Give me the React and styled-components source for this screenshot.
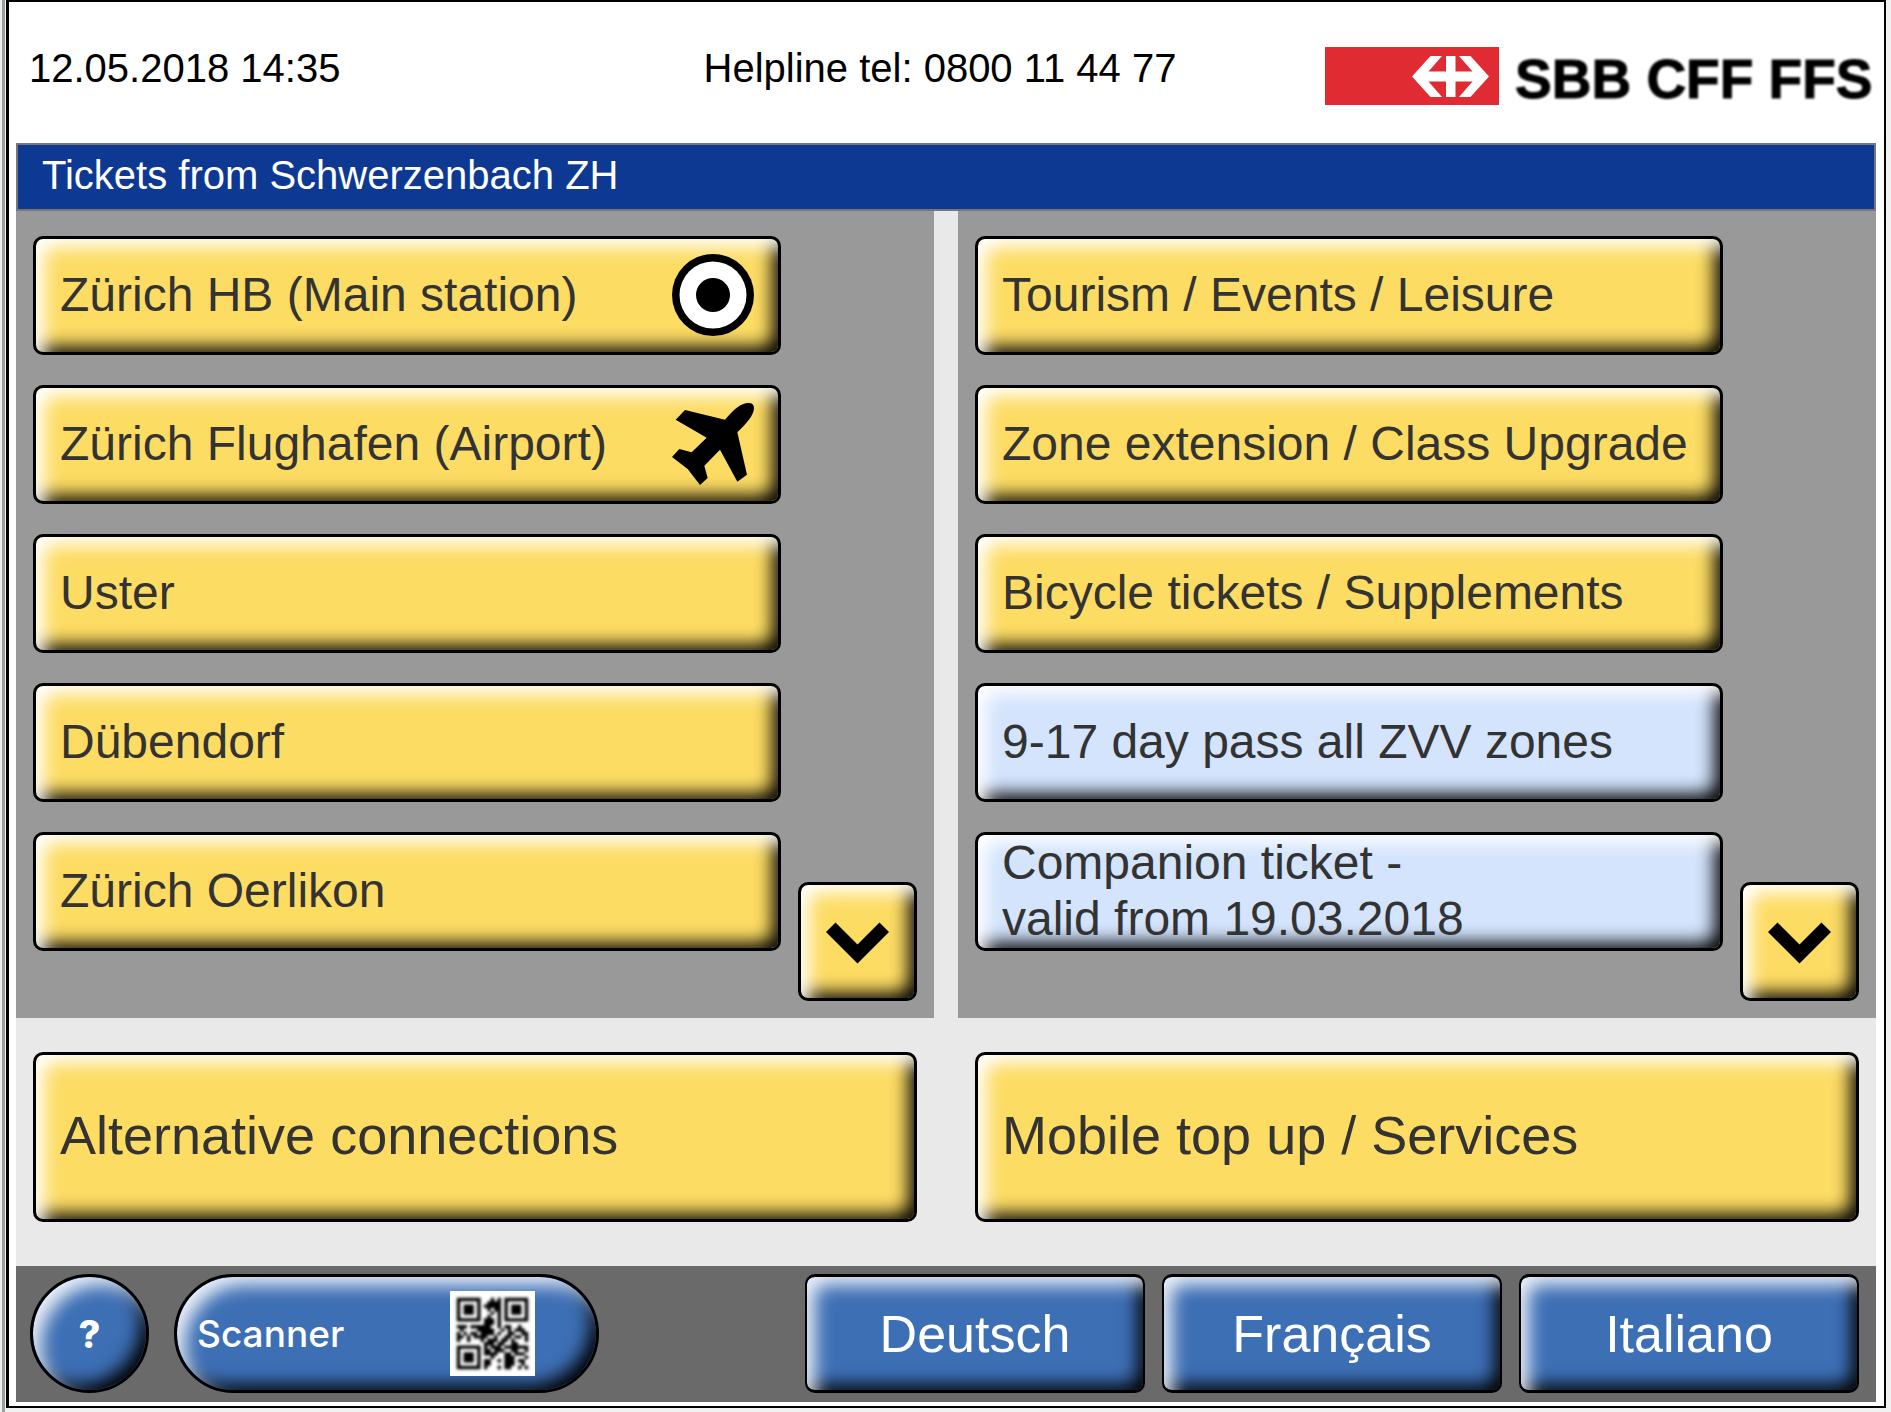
import React from "react";
import styled, { createGlobalStyle } from "styled-components";

const GlobalStyle = createGlobalStyle`
  *, *::before, *::after { box-sizing: border-box; }
  body {
    margin: 0;
    background: #f1f1f1;
    font-family: "Liberation Sans", Arial, Helvetica, sans-serif;
    color: #000;
  }
  button { font-family: inherit; cursor: pointer; }
`;

const Window = styled.div`
  margin-left: 2px;
  border-left: 3px solid #9a9fa2;
  padding: 0 5px 4px 1px;
`;

const Screen = styled.main`
  background: #fff;
  border: 2px solid #000;
  border-left-width: 3px;
  padding: 0 8px 4px 7px;
`;

const Header = styled.header`
  display: grid;
  grid-template-columns: 1fr auto 1fr;
  align-items: start;
  height: 141px;
  padding-top: 45px;
  font-size: 40px;
  line-height: 42px;
  white-space: nowrap;
`;

const DateTime = styled.time`
  padding-left: 13px;
`;

const Helpline = styled.span`
  padding-right: 12px;
`;

const LogoLink = styled.a`
  display: block;
  justify-self: end;
  line-height: 0;
`;

const LogoDrawing = styled.svg`
  overflow: visible;
`;

const Wordmark = styled.text`
  font: bold 55px "Liberation Sans", Arial, sans-serif;
  fill: #000;
  stroke: #000;
  stroke-width: 1px;
  filter: blur(1px);
`;

const TitleBar = styled.h1`
  margin: 0;
  padding: 7px 24px 11px;
  background: #0e3993;
  border: 2px solid #76777d;
  color: #fff;
  font-size: 40px;
  font-weight: 400;
  line-height: 46px;
`;

const Panels = styled.div`
  display: grid;
  grid-template-columns: 1fr 1fr;
  gap: 24px;
  background: #e9e9e9;
`;

const Panel = styled.section`
  display: flex;
  align-items: flex-end;
  gap: 17px;
  padding: 25px 17px 17px;
  background: #999;
`;

const List = styled.div`
  flex: 1;
  min-width: 0;
  display: flex;
  flex-direction: column;
  gap: 30px;
  padding-bottom: 50px;
`;

const tones = {
  yellow: { face: "#fddc64", ink: "#333" },
  pale: { face: "#d3e4fc", ink: "#333" },
  blue: { face: "#3d6fb5", ink: "#fff" },
};

const Key = styled.button`
  display: flex;
  align-items: center;
  height: 119px;
  padding: 0;
  border: 3px solid #000;
  border-radius: 10px;
  background: ${(p) => tones[p.$tone || "yellow"].face};
  color: ${(p) => tones[p.$tone || "yellow"].ink};
  text-align: left;
  white-space: nowrap;
  box-shadow:
    inset 12px 12px 18px -4px rgba(255, 255, 255, ${(p) => (p.$tone === "blue" ? 0.9 : 1)}),
    inset -11px -11px 18px -6px #000;
`;

const ListKey = styled(Key)`
  justify-content: space-between;
  padding: 0 24px 2px;
  font-size: 48px;
  line-height: 56px;
`;

const KeyLabel = styled.span`
  white-space: pre-line;
`;

const ArrowKey = styled(Key)`
  flex: none;
  width: 119px;
`;

const Services = styled.div`
  display: grid;
  grid-template-columns: 1fr 1fr;
  gap: 58px;
  padding: 34px 17px 44px;
  background: #e9e9e9;
`;

const WideKey = styled(Key)`
  height: 170px;
  padding: 0 24px 4px;
  font-size: 54px;
`;

const Footer = styled.footer`
  display: flex;
  align-items: center;
  padding: 8px 17px 9px 14px;
  background: #6a6a6a;
`;

const HelpKey = styled(Key)`
  justify-content: center;
  width: 119px;
  border-radius: 60px;
  font: 800 38px Inter, sans-serif;
`;

const ScannerKey = styled(Key)`
  justify-content: space-between;
  width: 425px;
  margin-left: 25px;
  padding: 0 61px 0 20px;
  border-radius: 60px;
  font: 500 37px Inter, sans-serif;
`;

const Languages = styled.nav`
  display: flex;
  gap: 17px;
  margin-left: auto;
`;

const LanguageKey = styled(Key)`
  justify-content: center;
  width: 340px;
  border-width: 3px 2px;
  font-size: 52px;
`;

function SbbLogo() {
  return (
    <LogoDrawing width="551" height="58" viewBox="0 0 551 58" role="img" aria-label="SBB CFF FFS">
      <rect width="174" height="58" fill="#e02b33" />
      <g fill="#fff">
        <path d="M87 29.5 105.5 9H117L103.5 24.5H147.5L134 9H145.5L164 29.5 145.5 50H134L147.5 34.5H103.5L117 50H105.5Z" />
        <path d="M121 9H130.5V50H121Z" />
      </g>
      <Wordmark x="190" y="51">SBB CFF FFS</Wordmark>
    </LogoDrawing>
  );
}

function StationIcon() {
  return (
    <svg width="82" height="82" viewBox="0 0 82 82" aria-hidden="true">
      <circle cx="41" cy="41" r="41" />
      <circle cx="41" cy="41" r="33.5" fill="#fff" />
      <circle cx="41" cy="41" r="17" />
    </svg>
  );
}

function PlaneIcon() {
  return (
    <svg width="82" height="82" viewBox="0 0 246 246" aria-hidden="true">
      <path d="M39 21 159 50C186 19 206 0 230 0Q246 0 246 16C246 36 224 61 196 88L225 215 196 236 144 140 97 188 107 225 84 246 47 198 0 162 22 138 59 148 104 104 11 50Z" />
    </svg>
  );
}

function ChevronIcon() {
  return (
    <svg width="113" height="113" viewBox="3 3 113 113" aria-hidden="true">
      <path d="M28 50 37.5 40.5 59.5 62.5 81.5 40.5 91 50 59.5 81.5Z" />
    </svg>
  );
}

const qrRows = [
  "XXXXXXX...X.X.XXXXXXX",
  "X.....X..XXXX.X.....X",
  "X.XXX.X.XXXXX.X.XXX.X",
  "X.XXX.X..X.XX.X.XXX.X",
  "X.XXX.X...X.X.X.XXX.X",
  "X.....X..X..X.X.....X",
  "XXXXXXX.XXX.X.XXXXXXX",
  "........XXX.X........",
  "XXX.XXXXXX..X.XX..X..",
  ".X....XXXXX..X.X.XXX.",
  "X.X.XX.XXXX.X..XX..XX",
  "XX.X.XXXX..X..XX.XX.X",
  "X..X...X.XXX.XX.X...X",
  "........XXX.XX..XX...",
  "XXXXXXX.X.XXX.XXXXXXX",
  "X.....X.XX.XXX..XX..X",
  "X.XXX.X.XXXX..XX.XXX.",
  "X.XXX.X...X...XXX...X",
  "X.XXX.X.XX..X.XXX.XX.",
  "X.....X.XX....XXX..X.",
  "XXXXXXX.X...X.XX..X.X",
];

const qrPath = qrRows
  .map((row, y) =>
    [...row]
      .map((cell, x) => (cell === "X" ? `M${x * 10} ${y * 10}h10v10h-10z` : ""))
      .join("")
  )
  .join("");

const QrModules = styled.path`
  filter: blur(4px);
`;

function QrIcon() {
  return (
    <svg width="85" height="85" viewBox="-20 -20 250 250" aria-hidden="true">
      <rect x="-20" y="-20" width="250" height="250" fill="#fff" />
      <QrModules d={qrPath} />
    </svg>
  );
}

const destinations = [
  { label: "Zürich HB (Main station)", icon: <StationIcon /> },
  { label: "Zürich Flughafen (Airport)", icon: <PlaneIcon /> },
  { label: "Uster" },
  { label: "Dübendorf" },
  { label: "Zürich Oerlikon" },
];

const offers = [
  { label: "Tourism / Events / Leisure" },
  { label: "Zone extension / Class Upgrade" },
  { label: "Bicycle tickets / Supplements" },
  { label: "9-17 day pass all ZVV zones", tone: "pale" },
  { label: "Companion ticket -\nvalid from 19.03.2018", tone: "pale" },
];

function KeyPanel({ name, items }) {
  return (
    <Panel aria-label={name}>
      <List>
        {items.map(({ label, icon, tone }) => (
          <ListKey key={label} type="button" $tone={tone}>
            <KeyLabel>{label}</KeyLabel>
            {icon}
          </ListKey>
        ))}
      </List>
      <ArrowKey type="button" aria-label={`More ${name}`}>
        <ChevronIcon />
      </ArrowKey>
    </Panel>
  );
}

export default function App() {
  return (
    <>
      <GlobalStyle />
      <Window>
        <Screen>
          <Header>
            <DateTime dateTime="2018-05-12T14:35">12.05.2018 14:35</DateTime>
            <Helpline>Helpline tel: 0800 11 44 77</Helpline>
            <LogoLink href="#" aria-label="SBB CFF FFS">
              <SbbLogo />
            </LogoLink>
          </Header>
          <TitleBar>Tickets from Schwerzenbach ZH</TitleBar>
          <Panels>
            <KeyPanel name="destinations" items={destinations} />
            <KeyPanel name="offers" items={offers} />
          </Panels>
          <Services>
            <WideKey type="button">Alternative connections</WideKey>
            <WideKey type="button">Mobile top up / Services</WideKey>
          </Services>
          <Footer>
            <HelpKey type="button" $tone="blue" aria-label="Help">?</HelpKey>
            <ScannerKey type="button" $tone="blue">
              Scanner
              <QrIcon />
            </ScannerKey>
            <Languages aria-label="Language">
              {["Deutsch", "Français", "Italiano"].map((language) => (
                <LanguageKey key={language} type="button" $tone="blue">
                  {language}
                </LanguageKey>
              ))}
            </Languages>
          </Footer>
        </Screen>
      </Window>
    </>
  );
}
